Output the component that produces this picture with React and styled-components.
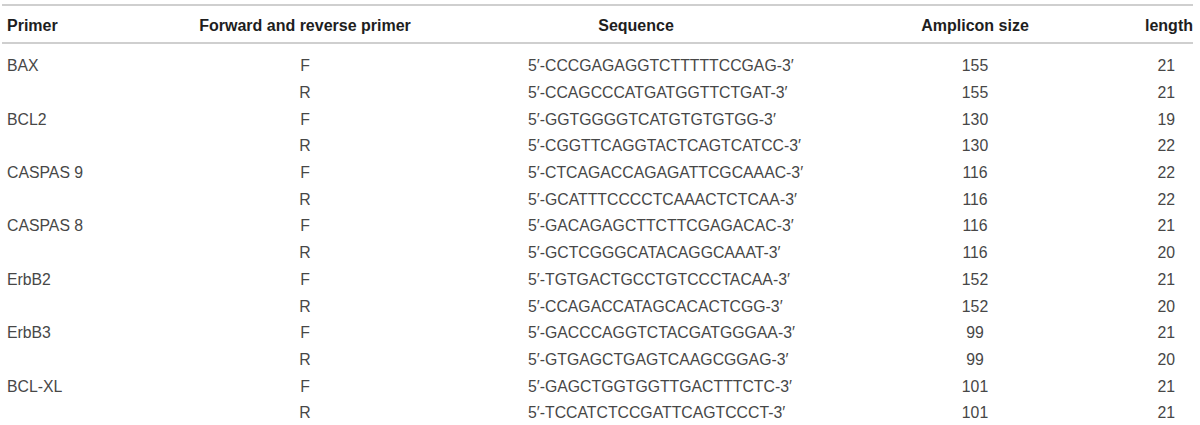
import React from "react";
import styled, { createGlobalStyle } from "styled-components";

const GlobalStyle = createGlobalStyle`
  html, body {
    margin: 0;
    padding: 0;
    background: #ffffff;
  }
`;

const Page = styled.div`
  padding: 4px 7px 0 2px;
  width: 1200px;
  box-sizing: border-box;
  font-family: "Liberation Sans", Arial, sans-serif;
`;

const Table = styled.table`
  width: 1191px;
  table-layout: fixed;
  border-collapse: collapse;
  border-spacing: 0;
`;

const HeadRow = styled.tr`
  border-top: 2px solid #cfcfcf;
  border-bottom: 2px solid #cfcfcf;
`;

const HeadCell = styled.th`
  height: 38px;
  padding: 3px ${(p) => p.padRight || 0}px 0 ${(p) => p.padLeft || 0}px;
  box-sizing: border-box;
  text-align: ${(p) => p.align || "center"};
  font-size: 16px;
  font-weight: bold;
  color: #1e1e1e;
  white-space: nowrap;
`;

const Body = styled.tbody`
  tr:first-child td {
    padding-top: 9px;
  }
`;

const Cell = styled.td`
  height: 26.7px;
  padding: 0 ${(p) => p.padRight || 0}px 0 ${(p) => p.padLeft || 0}px;
  text-align: ${(p) => p.align || "center"};
  font-size: 15.8px;
  color: #474747;
  white-space: nowrap;
  vertical-align: middle;
  line-height: 18px;
`;

const genes = [
  {
    name: "BAX",
    rows: [
      ["F", "5′-CCCGAGAGGTCTTTTTCCGAG-3′", "155", "21"],
      ["R", "5′-CCAGCCCATGATGGTTCTGAT-3′", "155", "21"],
    ],
  },
  {
    name: "BCL2",
    rows: [
      ["F", "5′-GGTGGGGTCATGTGTGTGG-3′", "130", "19"],
      ["R", "5′-CGGTTCAGGTACTCAGTCATCC-3′", "130", "22"],
    ],
  },
  {
    name: "CASPAS 9",
    rows: [
      ["F", "5′-CTCAGACCAGAGATTCGCAAAC-3′", "116", "22"],
      ["R", "5′-GCATTTCCCCTCAAACTCTCAA-3′", "116", "22"],
    ],
  },
  {
    name: "CASPAS 8",
    rows: [
      ["F", "5′-GACAGAGCTTCTTCGAGACAC-3′", "116", "21"],
      ["R", "5′-GCTCGGGCATACAGGCAAAT-3′", "116", "20"],
    ],
  },
  {
    name: "ErbB2",
    rows: [
      ["F", "5′-TGTGACTGCCTGTCCCTACAA-3′", "152", "21"],
      ["R", "5′-CCAGACCATAGCACACTCGG-3′", "152", "20"],
    ],
  },
  {
    name: "ErbB3",
    rows: [
      ["F", "5′-GACCCAGGTCTACGATGGGAA-3′", "99", "21"],
      ["R", "5′-GTGAGCTGAGTCAAGCGGAG-3′", "99", "20"],
    ],
  },
  {
    name: "BCL-XL",
    rows: [
      ["F", "5′-GAGCTGGTGGTTGACTTTCTC-3′", "101", "21"],
      ["R", "5′-TCCATCTCCGATTCAGTCCCT-3′", "101", "21"],
    ],
  },
];

export default function App() {
  return (
    <Page>
      <GlobalStyle />
      <Table>
        <colgroup>
          <col style={{ width: 188 }} />
          <col style={{ width: 230 }} />
          <col style={{ width: 432 }} />
          <col style={{ width: 246 }} />
          <col style={{ width: 95 }} />
        </colgroup>
        <thead>
          <HeadRow>
            <HeadCell align="left" padLeft={5}>
              Primer
            </HeadCell>
            <HeadCell>Forward and reverse primer</HeadCell>
            <HeadCell>Sequence</HeadCell>
            <HeadCell>Amplicon size</HeadCell>
            <HeadCell align="right">length</HeadCell>
          </HeadRow>
        </thead>
        <Body>
          {genes.flatMap((gene) =>
            gene.rows.map((row, i) => (
              <tr key={gene.name + row[0]}>
                <Cell align="left" padLeft={5}>
                  {i === 0 ? gene.name : ""}
                </Cell>
                <Cell>{row[0]}</Cell>
                <Cell align="left" padLeft={108}>
                  {row[1]}
                </Cell>
                <Cell>{row[2]}</Cell>
                <Cell align="right" padRight={18}>
                  {row[3]}
                </Cell>
              </tr>
            ))
          )}
        </Body>
      </Table>
    </Page>
  );
}
